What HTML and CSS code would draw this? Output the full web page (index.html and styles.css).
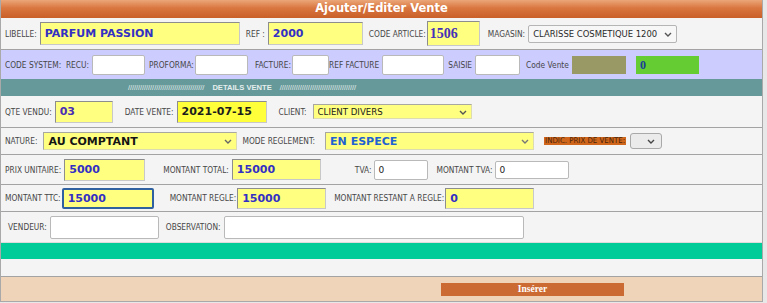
FILE: index.html
```html
<!DOCTYPE html>
<html lang="fr">
    <head>
        <meta charset="UTF-8">
        <meta name="viewport" content="width=device-width, initial-scale=1.0">
        <title>Ajouter/Editer Vente</title>

        <link rel="stylesheet" href="styles.css">
    </head>
    <body>
        <form class="panel">
            <div class="title">Ajouter/Editer Vente</div>

            <div class="row r1">
                <label class="f">LIBELLE: <input class="yel val blue w-lib" value="PARFUM PASSION"></label>
                <label class="f">REF : <input class="yel val blue w-ref" value="2000"></label>
                <label class="f tight">CODE ARTICLE:<input class="yel serif w-art" value="1506"></label>
                <label class="f m2">MAGASIN:
                    <span class="dd w-mag">
                        <select class="sel mag">
                            <option>CLARISSE COSMETIQUE 1200</option>
                        </select>
                        <svg class="chev" width="8" height="5" viewBox="0 0 8 5"><polyline points="1,1 4,4 7,1" fill="none" stroke="#555" stroke-width="1.4"/></svg>
                    </span>
                </label>
            </div>

            <div class="row r2">
                <label class="f">CODE SYSTEM:&nbsp; RECU: <input class="wht w-recu"></label>
                <label class="f tight">PROFORMA:<input class="wht w-recu"></label>
                <label class="f tight m3">FACTURE:<input class="wht w-fac"></label>
                <label class="f m-4">REF FACTURE <input class="wht w-reff"></label>
                <label class="f">SAISIE <input class="wht w-sai"></label>
                <label class="f m2">Code Vente <span class="box olive"></span></label>
                <span class="box green m6">0</span>
            </div>

            <div class="row r3">
                <span class="slashes">//////////////////////////////////////</span>
                <span class="sect">DETAILS VENTE</span>
                <span class="slashes">//////////////////////////////////////</span>
            </div>

            <div class="row r4">
                <label class="f">QTE VENDU: <input class="yel val purple w-qte" value="03"></label>
                <label class="f">DATE VENTE: <input class="yel bright val w-date" value="2021-07-15"></label>
                <label class="f wide">CLIENT:
                    <span class="dd w-cli">
                        <select class="sel yel cli">
                            <option>CLIENT DIVERS</option>
                        </select>
                        <svg class="chev" width="8" height="5" viewBox="0 0 8 5"><polyline points="1,1 4,4 7,1" fill="none" stroke="#555" stroke-width="1.4"/></svg>
                    </span>
                </label>
            </div>

            <div class="row r5">
                <label class="f wide">NATURE:
                    <span class="dd w-nat">
                        <select class="sel yel val">
                            <option>AU COMPTANT</option>
                        </select>
                        <svg class="chev" width="8" height="5" viewBox="0 0 8 5"><polyline points="1,1 4,4 7,1" fill="none" stroke="#666" stroke-width="1.4"/></svg>
                    </span>
                </label>
                <label class="f wider">MODE REGLEMENT:
                    <span class="dd w-mode">
                        <select class="sel yel val sky">
                            <option>EN ESPECE</option>
                        </select>
                        <svg class="chev" width="8" height="5" viewBox="0 0 8 5"><polyline points="1,1 4,4 7,1" fill="none" stroke="#777" stroke-width="1.4"/></svg>
                    </span>
                </label>
                <span class="indic m5">INDIC. PRIX DE VENTE:</span>
                <span class="dd w-small m-1">
                    <select class="sel small-sel">
                        <option></option>
                    </select>
                    <svg class="chev" width="8" height="5" viewBox="0 0 8 5"><polyline points="1,1 4,4 7,1" fill="none" stroke="#444" stroke-width="1.4"/></svg>
                </span>
            </div>

            <div class="row r6">
                <label class="f">PRIX UNITAIRE: <input class="yel val blue w-pu" value="5000"></label>
                <label class="f m10">MONTANT TOTAL: <input class="yel val blue w-mt" value="15000"></label>
                <label class="f m26">TVA: <input class="wht plain w-tva" value="0"></label>
                <label class="f">MONTANT TVA: <input class="wht plain w-mtva" value="0"></label>
            </div>

            <div class="row r7">
                <label class="f tight">MONTANT TTC: <input class="yel val blue focus w-ttc" value="15000"></label>
                <label class="f tight m8">MONTANT REGLE: <input class="yel val blue w-mt" value="15000"></label>
                <label class="f tight">MONTANT RESTANT A REGLE: <input class="yel val blue w-mt" value="0"></label>
            </div>

            <div class="row r8">
                <label class="f">VENDEUR: <input class="wht w-ven"></label>
                <label class="f">OBSERVATION: <input class="wht w-obs"></label>
            </div>

            <div class="bar"></div>
            <div class="row r10"></div>

            <div class="foot">
                <button type="button" class="btn">Insérer</button>
            </div>
        </form>
    </body>
</html>
```

FILE: styles.css
```css
* {
    box-sizing: border-box;
}

body {
    margin: 0;
    background: #e8e8e8;
    font-family: "DejaVu Sans Condensed", "DejaVu Sans", sans-serif;
}

.panel {
    width: 763px;
    display: flex;
    flex-direction: column;
    background: #f4f4f4;
    border: 1px solid #a9a9a9;
    border-top: 0;
    margin: 0;
}

.title {
    height: 18px;
    line-height: 17px;
    text-align: center;
    color: #fff;
    font-family: "DejaVu Sans", sans-serif;
    font-weight: bold;
    font-size: 11.5px;
    background: linear-gradient(#eba678, #d9763f 45%, #c95f29);
}

.row {
    display: flex;
    align-items: center;
    gap: 6px;
    padding-left: 4px;
    font-size: 8.3px;
    color: #474747;
    border-bottom: 1px solid #a3a3a3;
}

.r1 { height: 32px; }
.r2 { height: 29px; gap: 4px; background: #ccccff; border-bottom: 0; }
.r3 { height: 17px; gap: 8px; padding-left: 127px; background: #669999; border-bottom: 0; }
.r4 { height: 32px; gap: 12px; }
.r5 { height: 27px; gap: 5px; }
.r6 { height: 30px; gap: 8px; }
.r7 { height: 27px; gap: 8px; }
.r8 { height: 31px; gap: 7px; padding-left: 7px; border-bottom: 1px solid #dcdcdc; }
.r10 { height: 18px; }

.f {
    display: flex;
    align-items: center;
    gap: 3px;
    white-space: nowrap;
}

.f.tight { gap: 1px; }
.f.wide { gap: 6px; }
.f.wider { gap: 10px; }

.m2 { margin-left: 2px; }
.m3 { margin-left: 3px; }
.m5 { margin-left: 5px; }
.m6 { margin-left: 6px; }
.m8 { margin-left: 8px; }
.m10 { margin-left: 10px; }
.m26 { margin-left: 26px; }
.m-1 { margin-left: -1px; }
.m-4 { margin-left: -4px; }

input, select {
    margin: 0;
    font-family: "DejaVu Sans", sans-serif;
    outline: none;
}

input {
    padding: 0 4px;
}

.yel {
    background: #ffff80;
    border: 1px solid #c8c8c8;
    border-top-color: #8d8d8d;
    border-left-color: #8d8d8d;
}

.bright { background: #ffff3a; }

.wht {
    background: #fff;
    border: 1px solid #b9b9b9;
    border-radius: 2px;
}

.val {
    font-weight: bold;
    font-size: 11px;
    color: #141414;
}

.blue { color: #3330c4; }
.purple { color: #4a2db5; }

.serif {
    font-family: "Liberation Serif", serif;
    font-weight: bold;
    font-size: 14px;
    color: #4530b8;
    padding: 0 2px;
}

.plain {
    font-size: 9px;
    color: #222;
    padding: 0 3px;
}

.focus {
    border: 2px solid #2f609f;
    border-radius: 2px;
}

.w-lib { width: 200px; height: 23px; }
.w-ref { width: 95px; height: 23px; }
.w-art { width: 53px; height: 25px; }
.w-recu { width: 53px; height: 20px; }
.w-fac { width: 37px; height: 20px; }
.w-reff { width: 62px; height: 20px; }
.w-sai { width: 45px; height: 20px; }
.w-qte { width: 58px; height: 22px; }
.w-date { width: 90px; height: 22px; color: #1c1c1c; }
.w-pu { width: 81px; height: 22px; }
.w-mt { width: 89px; height: 21px; }
.w-tva { width: 54px; height: 20px; }
.w-mtva { width: 74px; height: 18px; }
.w-ttc { width: 92px; height: 21px; }
.w-ven { width: 109px; height: 23px; }
.w-obs { width: 300px; height: 23px; }

/* dropdowns: the arrow is drawn over the select */
.dd {
    position: relative;
    display: inline-flex;
}

.chev {
    position: absolute;
    right: 5px;
    top: 50%;
    margin-top: -2px;
    pointer-events: none;
}

.sel {
    -webkit-appearance: none;
    appearance: none;
    width: 100%;
    height: 100%;
    padding: 0 12px 0 4px;
    font-size: 9px;
    color: #1a1a1a;
    border: 1px solid #b5b5b5;
    border-radius: 2px;
}

.sel.yel {
    border-radius: 0;
    border-color: #dcdcb0;
    border-top-color: #a8a8a0;
    border-left-color: #a8a8a0;
}

.sel.val {
    font-size: 11px;
    color: #141414;
}

.sel.sky {
    color: #1f62d2;
}

.sel.cli {
    font-size: 8.6px;
}

.mag {
    background: #f7f7f7;
    font-family: "DejaVu Sans Condensed", "DejaVu Sans", sans-serif;
    font-size: 9.4px;
    color: #2a2a2a;
}

.w-mag { width: 149px; height: 18px; }
.w-cli { width: 159px; height: 15px; }
.w-nat { width: 194px; height: 18px; }
.w-mode { width: 209px; height: 18px; }
.w-small { width: 32px; height: 16px; }
.w-small .chev { right: 7px; }

.small-sel {
    background: #ebebeb;
    border-color: #a9a9a9;
    border-radius: 3px;
}

.box {
    display: inline-block;
    height: 18px;
}

.olive {
    width: 54px;
    background: #999966;
}

.green {
    width: 63px;
    padding: 0 4px;
    background: #66cc33;
    color: #173c98;
    font-family: "Liberation Serif", serif;
    font-weight: bold;
    font-size: 12px;
    line-height: 18px;
}

.slashes, .sect {
    color: #e4eeee;
    font-family: "Liberation Sans", sans-serif;
    font-size: 7.6px;
    font-weight: bold;
}

.slashes {
    font-weight: normal;
    letter-spacing: -0.1px;
}

.indic {
    background: #d0661c;
    color: #4a2408;
    font-size: 7.8px;
    line-height: 8px;
    padding: 0 1px;
    white-space: nowrap;
}

.bar {
    height: 16px;
    background: #00cc99;
}

.foot {
    height: 24px;
    padding: 6px 0 0 440px;
    background: #efd4b9;
}

.btn {
    display: block;
    width: 183px;
    height: 13px;
    padding: 0;
    border: 0;
    background: #cc6a33;
    color: #fff;
    font-family: "Liberation Serif", serif;
    font-weight: bold;
    font-size: 9.5px;
    line-height: 13px;
}
```
